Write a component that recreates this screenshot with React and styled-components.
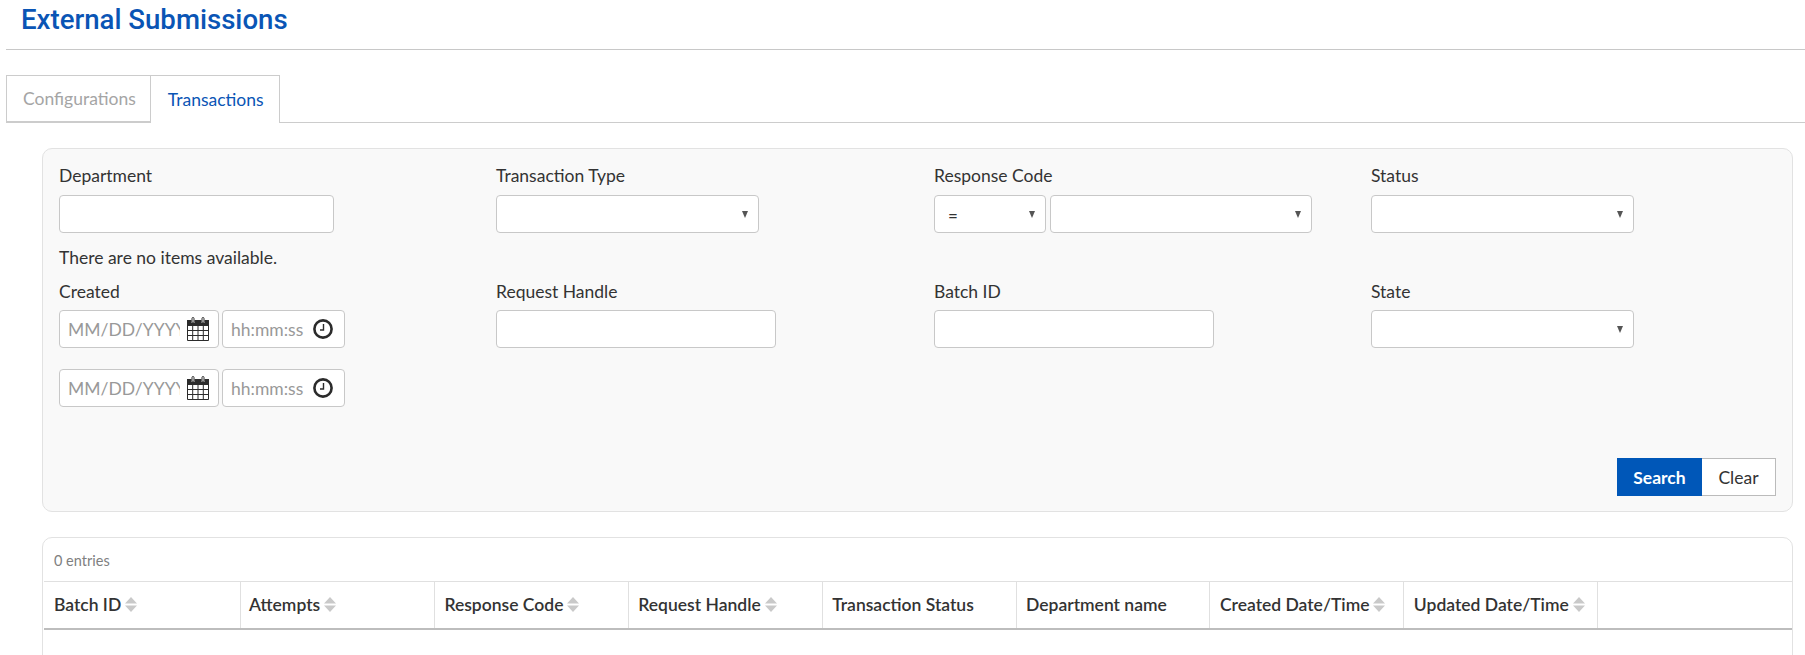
import React from "react";
import styled, { createGlobalStyle } from "styled-components";

const Global = createGlobalStyle`
  html, body { margin: 0; padding: 0; background: #fff; overflow: hidden; }
  body { font-family: Lato, "Liberation Sans", sans-serif; font-size: 17.5px; color: #333; }
  * { box-sizing: border-box; }
`;

const Page = styled.div`
  height: 655px;
  overflow: hidden;
  padding-left: 6px;
`;
const Header = styled.header`
  height: 50px;
  padding: 2px 0 0 15px;
  border-bottom: 1px solid #c8c8c8;
`;
const Title = styled.h1`
  margin: 0;
  font: 500 27.6px/36px Roboto, sans-serif;
  color: #0a55b5;
`;
const Tabs = styled.nav`
  display: flex;
  height: 48px;
  margin-top: 25px;
  border-bottom: 1px solid #ccc;
`;
const Tab = styled.div`
  display: flex;
  align-items: center;
  height: ${(p) => (p.$active ? "48px" : "47px")};
  padding: ${(p) => (p.$active ? "0 15px 0 17px" : "0 14px 0 16px")};
  border: 1px solid #ccc;
  border-left-width: ${(p) => (p.$active ? "0" : "1px")};
  border-bottom-width: ${(p) => (p.$active ? "0" : "1px")};
  background: #fff;
  color: ${(p) => (p.$active ? "#0a55b5" : "#a5a5a5")};
  font-size: 17.5px;
`;
const Content = styled.main`
  padding: 25px 12px 0 36px;
`;
const Panel = styled.section`
  height: 364px;
  padding: 13px 0 0 16px;
  background: #f9f9f9;
  border: 1px solid #e2e2e2;
  border-radius: 10px;
  display: flex;
  flex-direction: column;
`;
const Row = styled.div`
  display: grid;
  grid-template-columns: 437px 438px 437px 437px;
`;
const Field = styled.div`
  display: flex;
  flex-direction: column;
  align-items: flex-start;
  gap: ${(p) => p.$gap || "6px"};
`;
const Label = styled.label`
  display: block;
  line-height: 27px;
  color: #333;
`;
const Input = styled.input`
  width: ${(p) => p.$w};
  height: 38px;
  padding: 0 8px;
  background: #fff;
  border: 1px solid #c8c8c8;
  border-radius: 4px;
  font: inherit;
`;
const SelectBox = styled.div`
  position: relative;
  width: ${(p) => p.$w};
  &::after {
    content: "";
    position: absolute;
    top: 16px;
    right: 11px;
    border-left: 3.5px solid transparent;
    border-right: 3.5px solid transparent;
    border-top: 7px solid #555;
    pointer-events: none;
  }
`;
const Select = styled.select`
  display: block;
  width: 100%;
  height: 38px;
  padding: 2px 13px 0;
  appearance: none;
  background: #fff;
  border: 1px solid #c8c8c8;
  border-radius: 4px;
  font: 17px Lato, sans-serif;
  color: #333;
`;
const Inline = styled.div`
  display: flex;
  gap: ${(p) => p.$gap || "3px"};
`;
const NoItems = styled.div`
  height: 25px;
  margin-top: 12px;
  line-height: 25px;
`;
const Second = styled(Row)`
  margin-top: 8px;
`;
const DateStack = styled.div`
  display: flex;
  flex-direction: column;
  gap: 21px;
`;
const PickerBox = styled.div`
  display: flex;
  align-items: center;
  width: ${(p) => p.$w};
  height: 38px;
  padding: 0 ${(p) => p.$pr} 0 8px;
  background: #fff;
  border: 1px solid #c8c8c8;
  border-radius: 4px;
`;
const PickerInput = styled.input`
  flex: 1;
  min-width: 0;
  margin-right: 7px;
  padding: 0;
  height: 100%;
  border: 0;
  outline: 0;
  background: transparent;
  font: 17.5px Lato, sans-serif;
  &::placeholder { color: #999; opacity: 1; }
`;
const Actions = styled.div`
  display: flex;
  justify-content: flex-end;
  margin-top: auto;
  padding: 0 16px 15px 0;
`;
const Button = styled.button`
  height: 38px;
  padding: 0;
  width: ${(p) => p.$w};
  border: 1px solid ${(p) => (p.$primary ? "#0057b8" : "#bbb")};
  border-left-width: ${(p) => (p.$primary ? "1px" : "0")};
  background: ${(p) => (p.$primary ? "#0057b8" : "#fff")};
  color: ${(p) => (p.$primary ? "#fff" : "#333")};
  font: ${(p) => (p.$primary ? 700 : 400)} 17.5px Lato, sans-serif;
`;
const Card = styled.section`
  margin-top: 25px;
  height: 200px;
  border: 1px solid #e2e2e2;
  border-radius: 10px 10px 0 0;
`;
const Entries = styled.div`
  height: 43px;
  padding-left: 11px;
  line-height: 46px;
  font-size: 14.5px;
  color: #808080;
`;
const HeadRow = styled.div`
  display: grid;
  grid-template-columns: 197px repeat(7, 193.9px) 1fr;
  height: 49px;
  margin-left: 1px;
  border-top: 1px solid #e0e0e0;
  border-bottom: 2px solid #bdbdbd;
`;
const HeadCell = styled.div`
  display: flex;
  align-items: center;
  gap: 4px;
  padding: 0 0 2px 9.5px;
  border-right: ${(p) => (p.$last ? "0" : "1px solid #e0e0e0")};
  font-size: 17.5px;
  font-weight: 600;
  color: #333;
  &:first-child { padding-left: 10px; }
  &:nth-child(2) { padding-left: 8px; }
`;

const CalendarIcon = () => (
  <svg width="22" height="24" viewBox="0 0 22 24">
    <path fill="#2b2b2b" d="M0 3h4.5v3h3V3h7v3h3V3H22v6H0z" />
    <rect x="5" y="0.5" width="2" height="5.5" rx="1" fill="none" stroke="#2b2b2b" />
    <rect x="15" y="0.5" width="2" height="5.5" rx="1" fill="none" stroke="#2b2b2b" />
    <path
      fill="none"
      stroke="#2b2b2b"
      d="M.5 9v14.5h21V9M5.7 9v14M11 9v14M16.3 9v14M0 13.5h22M0 18.5h22"
    />
  </svg>
);

const ClockIcon = () => (
  <svg width="20" height="20" viewBox="0 0 20 20">
    <circle cx="10" cy="10" r="8.6" fill="#fff" stroke="#2b2b2b" strokeWidth="2.6" />
    <path d="M10.5 5v6H7" fill="none" stroke="#2b2b2b" strokeWidth="1.4" />
  </svg>
);

const SortIcon = () => (
  <svg width="12" height="15" viewBox="0 0 12 15">
    <path fill="#c9c9c9" d="M6 0L12 6.6H0zM0 8.4h12L6 15z" />
  </svg>
);

const DateTime = () => (
  <Inline>
    <PickerBox $w="160px" $pr="9px">
      <PickerInput placeholder="MM/DD/YYYY" />
      <CalendarIcon />
    </PickerBox>
    <PickerBox $w="123px" $pr="11px">
      <PickerInput placeholder="hh:mm:ss" />
      <ClockIcon />
    </PickerBox>
  </Inline>
);

const columns = [
  ["Batch ID", true],
  ["Attempts", true],
  ["Response Code", true],
  ["Request Handle", true],
  ["Transaction Status", false],
  ["Department name", false],
  ["Created Date/Time", true],
  ["Updated Date/Time", true],
];

export default function App() {
  return (
    <Page>
      <Global />
      <Header>
        <Title>External Submissions</Title>
      </Header>
      <Tabs>
        <Tab>Configurations</Tab>
        <Tab $active>Transactions</Tab>
      </Tabs>
      <Content>
        <Panel>
          <Row>
            <Field>
              <Label>Department</Label>
              <Input $w="275px" />
            </Field>
            <Field>
              <Label>Transaction Type</Label>
              <SelectBox $w="263px">
                <Select />
              </SelectBox>
            </Field>
            <Field>
              <Label>Response Code</Label>
              <Inline $gap="4px">
                <SelectBox $w="112px">
                  <Select>
                    <option>=</option>
                  </Select>
                </SelectBox>
                <SelectBox $w="262px">
                  <Select />
                </SelectBox>
              </Inline>
            </Field>
            <Field>
              <Label>Status</Label>
              <SelectBox $w="263px">
                <Select />
              </SelectBox>
            </Field>
          </Row>
          <NoItems>There are no items available.</NoItems>
          <Second>
            <Field $gap="5px">
              <Label>Created</Label>
              <DateStack>
                <DateTime />
                <DateTime />
              </DateStack>
            </Field>
            <Field $gap="5px">
              <Label>Request Handle</Label>
              <Input $w="280px" />
            </Field>
            <Field $gap="5px">
              <Label>Batch ID</Label>
              <Input $w="280px" />
            </Field>
            <Field $gap="5px">
              <Label>State</Label>
              <SelectBox $w="263px">
                <Select />
              </SelectBox>
            </Field>
          </Second>
          <Actions>
            <Button $primary $w="85px">Search</Button>
            <Button $w="74px">Clear</Button>
          </Actions>
        </Panel>
        <Card>
          <Entries>0 entries</Entries>
          <HeadRow>
            {columns.map(([name, sortable]) => (
              <HeadCell key={name}>
                {name}
                {sortable && <SortIcon />}
              </HeadCell>
            ))}
            <HeadCell $last />
          </HeadRow>
        </Card>
      </Content>
    </Page>
  );
}
